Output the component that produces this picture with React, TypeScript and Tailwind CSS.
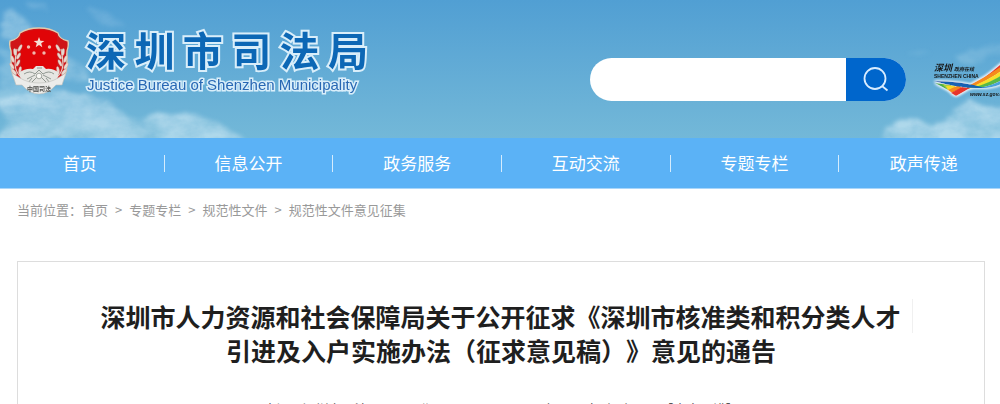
const navItems = ["首页", "信息公开", "政务服务", "互动交流", "专题专栏", "政声传递"];
const crumbs = ["首页", "专题专栏", "规范性文件", "规范性文件意见征集"];

function Clouds() {
    return (
        <svg className="absolute inset-0 h-full w-full" viewBox="0 0 1000 138" preserveAspectRatio="none" aria-hidden="true">
            <defs>
                <filter id="cloud" x="-10%" y="-20%" width="120%" height="140%">
                    <feTurbulence type="fractalNoise" baseFrequency="0.03 0.045" numOctaves="5" seed="8" result="noise" />
                    <feDisplacementMap in="SourceGraphic" in2="noise" scale="20" xChannelSelector="R" yChannelSelector="G" result="shape" />
                    <feGaussianBlur in="shape" stdDeviation="2" result="soft" />
                    <feColorMatrix in="noise" type="matrix" values="0 0 0 0 1  0 0 0 0 1  0 0 0 0 1  1.2 0 0 0 0.1" result="mask" />
                    <feComposite in="soft" in2="mask" operator="in" />
                </filter>
            </defs>
            <g filter="url(#cloud)" fill="#cbe7f4">
                <path d="M4 14 L14 10 L26 22 L54 46 L80 66 L94 84 L60 78 L30 52 L0 40 Z" opacity="0.5" />
                <path d="M0 44 L20 60 L50 92 L70 102 L0 110 Z" opacity="0.35" />
                <path d="M0 98 L40 96 L66 92 L92 98 L116 110 L134 124 L164 142 L0 142 Z" opacity="0.65" />
                <path d="M136 122 L162 114 L186 115 L212 120 L228 128 L246 144 L160 144 Z" opacity="0.7" />
                <path d="M872 144 L888 126 L904 120 L924 121 L934 128 L952 112 L970 104 L1006 104 L1006 144 Z" opacity="0.7" />
                <path d="M905 58 L920 52 L926 58 Z M955 62 L985 46 L1004 44 L1004 52 L970 64 Z" opacity="0.25" />
                <path d="M28 0 L44 6 L54 14 L40 12 Z M86 8 L108 12 L128 26 L104 26 L86 14 Z" opacity="0.2" />
            </g>
        </svg>
    );
}

function Leaves() {
    return (
        <g fill="#ead9d0" stroke="#b98f86" strokeWidth="0.3">
            <path d="M13 50 C6 44 6 36 9 22" fill="none" stroke="#e6cfc4" strokeWidth="1.2" />
            <ellipse cx="7" cy="25" rx="1.5" ry="3.6" transform="rotate(-8 7 25)" />
            <ellipse cx="12" cy="21" rx="1.4" ry="3.8" transform="rotate(28 12 21)" />
            <ellipse cx="4.5" cy="32" rx="1.5" ry="3.6" transform="rotate(-20 4.5 32)" />
            <ellipse cx="10.5" cy="29" rx="1.4" ry="3.6" transform="rotate(30 10.5 29)" />
            <ellipse cx="4" cy="39" rx="1.5" ry="3.6" transform="rotate(-30 4 39)" />
            <ellipse cx="10" cy="36" rx="1.4" ry="3.6" transform="rotate(25 10 36)" />
            <ellipse cx="6" cy="45" rx="1.6" ry="3.6" transform="rotate(-40 6 45)" />
            <ellipse cx="12" cy="43" rx="1.4" ry="3.6" transform="rotate(10 12 43)" />
        </g>
    );
}

function Emblem() {
    return (
        <svg className="h-[68px] w-[62px] shrink-0" viewBox="0 0 62 68" role="img" aria-label="中国司法">
            <path d="M31 1 C24 1 18 2 12 6 Q11 12 2 14 Q1 18 3 24 C4 32 1 40 6 50 L20 60 H42 L56 50 C61 40 58 32 59 24 Q61 18 60 14 Q51 12 50 6 C44 2 38 1 31 1 Z" fill="#cf1518" stroke="#e0cdb0" strokeWidth="1.4" />
            <path d="M31 3 C24 3 19 4 13 8 V40 Q14 48 22 49 H40 Q48 48 49 40 V8 C43 4 38 3 31 3 Z" fill="#e00508" />
            <Leaves />
            <g transform="translate(62 0) scale(-1 1)">
                <Leaves />
            </g>
            <path d="M31 10 L32.4 13.8 L36.4 13.9 L33.2 16.3 L34.3 20.2 L31 17.9 L27.7 20.2 L28.8 16.3 L25.6 13.9 L29.6 13.8 Z" fill="#f6dfd5" />
            <g fill="#f0b9ae">
                <circle cx="20.5" cy="20" r="1.7" />
                <circle cx="41.5" cy="20" r="1.7" />
                <circle cx="26" cy="26" r="1.7" />
                <circle cx="36" cy="26" r="1.7" />
            </g>
            <path d="M11 46 Q17 41 25 42 L28 39 H35 L38 42 Q45 41 51 46 L48 56 Q38 60 31 60 Q23 60 14 56 Z" fill="#e6e6e2" />
            <path d="M16 47 Q22 43 27 47 L31 43 L35 47 Q41 43 46 47 M19 52 L27 48 M43 52 L35 48 M29 41 H34 M24 55 L29 50 M38 55 L33 50 M20 56 L24 51 M42 56 L38 51" fill="none" stroke="#879089" strokeWidth="0.9" />
            <circle cx="31" cy="49" r="2.8" fill="#f8f8f4" stroke="#858b84" strokeWidth="0.7" />
            <path d="M4 46 L12 51 Q20 56 31 56 Q42 56 50 51 L58 46 L54 58 L48 58 Q40 67 31 67 Q22 67 14 58 L8 58 Z" fill="#ececea" stroke="#bdbdb8" strokeWidth="0.6" />
            <text x="31" y="64" textAnchor="middle" fontSize="6" fontWeight="700" fill="#4c4d4a" fontFamily="'Noto Sans CJK SC', sans-serif">中国司法</text>
        </svg>
    );
}

function PortalLogo() {
    return (
        <svg className="h-11 w-20" viewBox="0 0 80 44" role="img" aria-label="深圳政府在线">
            <defs>
                <filter id="glow" x="-10%" y="-20%" width="120%" height="140%">
                    <feMorphology in="SourceAlpha" operator="dilate" radius="1" />
                    <feGaussianBlur stdDeviation="1" result="b" />
                    <feFlood floodColor="#ffffff" floodOpacity="0.9" />
                    <feComposite in2="b" operator="in" result="halo" />
                    <feMerge>
                        <feMergeNode in="halo" />
                        <feMergeNode in="SourceGraphic" />
                    </feMerge>
                </filter>
            </defs>
            <g filter="url(#glow)">
                <path d="M25 38 Q48 26 76 1 L76 5 Q52 28 30 34 Z" fill="#e8352b" />
                <path d="M36 29 Q56 19 76 5 L76 9 Q58 24 34 32 Z" fill="#f58a1f" />
                <path d="M34 32 Q58 23 76 9 L76 14 Q60 27 41 31 Z" fill="#f7e02c" />
                <path d="M40 31 Q60 26 76 14 L76 19 Q62 29 47 31 Z" fill="#58b947" />
                <path d="M47 31 Q64 28 76 19 L76 23 Q66 30 54 31 Z" fill="#4aa3dc" />
                <path d="M3 26 L12 27 L16 33 Z" fill="#4cae4a" />
                <path d="M10 27 L19 28 L21 34 L16 33 Z" fill="#a8cf3c" />
                <path d="M14 29 L24 28 L22 33 L16 33 Z" fill="#f7d92c" />
                <path d="M16 33 L27 28 L30 31 L20 36 Z" fill="#f58a1f" />
                <path d="M19 36 L30 30 L38 31 L24 39 Z" fill="#e8352b" />
                <path d="M2 24 Q30 24 53 31 Q28 32 2 24 Z" fill="#1262b3" />
            </g>
            <g fill="#161616" fontFamily="'Noto Sans CJK SC', sans-serif" fontStyle="italic" fontWeight="700">
                <text x="2" y="14" fontSize="9">深圳</text>
                <text x="22" y="14" fontSize="5">政府在线</text>
            </g>
            <text x="2" y="21" fontSize="5" fontWeight="700" fill="#161616" fontFamily="'Liberation Sans', sans-serif">SHENZHEN CHINA</text>
            <text x="38" y="39" fontSize="5" fontWeight="700" fontStyle="italic" fill="#161616" fontFamily="'Liberation Sans', sans-serif">www.sz.gov.cn</text>
        </svg>
    );
}

function Header() {
    return (
        <header className="relative flex h-[138px] overflow-hidden bg-linear-to-b from-[#519fd3] to-[#73b8d8]">
            <Clouds />
            <a href="#" className="relative flex items-start pt-[27px] pl-2">
                <Emblem />
                <div className="ml-4 flex w-[282px] flex-col gap-0.5 [paint-order:stroke_fill]">
                    <div className="flex justify-between text-[40px] leading-[44px] font-bold text-[#0c67b5] [-webkit-text-stroke:4px_#d9eefa]">
                        {[..."深圳市司法局"].map((char) => (
                            <span key={char}>{char}</span>
                        ))}
                    </div>
                    <div className="pl-px font-['Liberation_Sans',sans-serif] text-[15px] leading-6 whitespace-nowrap text-[#2868b4] [-webkit-text-stroke:3px_#d9eefa]">
                        Justice Bureau of Shenzhen Municipality
                    </div>
                </div>
            </a>
            <form className="relative mt-[58px] mr-[26px] ml-auto flex h-[43px] w-[316px] shrink-0 overflow-hidden rounded-full bg-white" onSubmit={(e) => e.preventDefault()}>
                <input type="search" aria-label="搜索" className="min-w-0 flex-1 px-5 text-sm outline-none" />
                <button type="submit" aria-label="搜索" className="flex w-[60px] items-center justify-center bg-[#0066cc] text-[#d8ecff]">
                    <svg className="h-7 w-7" viewBox="0 0 28 28" fill="none" stroke="currentColor" strokeWidth="1.8" aria-hidden="true">
                        <circle cx="13" cy="12.5" r="10.5" />
                        <path d="M20 20 L25.5 24.5" />
                    </svg>
                </button>
            </form>
            <a href="#" className="relative mt-[57px] w-[68px] shrink-0 overflow-hidden">
                <PortalLogo />
            </a>
        </header>
    );
}

export default function App() {
    return (
        <div className="h-screen overflow-hidden bg-white font-['Noto_Sans_CJK_SC',sans-serif]">
            <Header />
            <nav className="overflow-hidden border-b border-[#a9d6fa] bg-[#5bb2f6]">
                <ul className="-mr-2 -ml-1 grid grid-cols-6">
                    {navItems.map((item) => (
                        <li key={item} className="group flex h-[50px] items-center">
                            <a href="#" className="flex-1 text-center text-[17px] text-white">{item}</a>
                            <span className="h-[17px] w-px bg-[#d5ecfd] group-last:hidden" />
                        </li>
                    ))}
                </ul>
            </nav>
            <div className="flex px-[17px] pt-[11px] text-[13px] leading-5 text-[#999999]">
                <span>当前位置：</span>
                {crumbs.map((crumb, index) => (
                    <span key={crumb}>
                        {index > 0 && <span className="mx-[7px]">&gt;</span>}
                        <a href="#">{crumb}</a>
                    </span>
                ))}
            </div>
            <main className="mt-[41px] mr-[15px] ml-[17px] border border-[#dddddd] px-[71px] pt-[37px] pb-10">
                <h1 className="text-center text-[25px] leading-[34px] font-bold text-[#1f1f1f] [text-spacing-trim:space-all]">
                    <span className="block border-r border-[#f0f0f0]">深圳市人力资源和社会保障局关于公开征求《深圳市核准类和积分类人才</span>
                    <span className="block">引进及入户实施办法（征求意见稿）》意见的通告</span>
                </h1>
                <div className="mt-8 flex justify-center gap-7 text-[13px] leading-5 text-[#555555]">
                    <span>来源：深圳市司法局</span>
                    <span>日期：2021-08-03</span>
                    <span className="flex gap-1">
                        字号：
                        <button type="button">大</button>
                        <button type="button">中</button>
                        <button type="button">小</button>
                    </span>
                    <a href="#">【内容纠错】</a>
                </div>
            </main>
        </div>
    );
}
